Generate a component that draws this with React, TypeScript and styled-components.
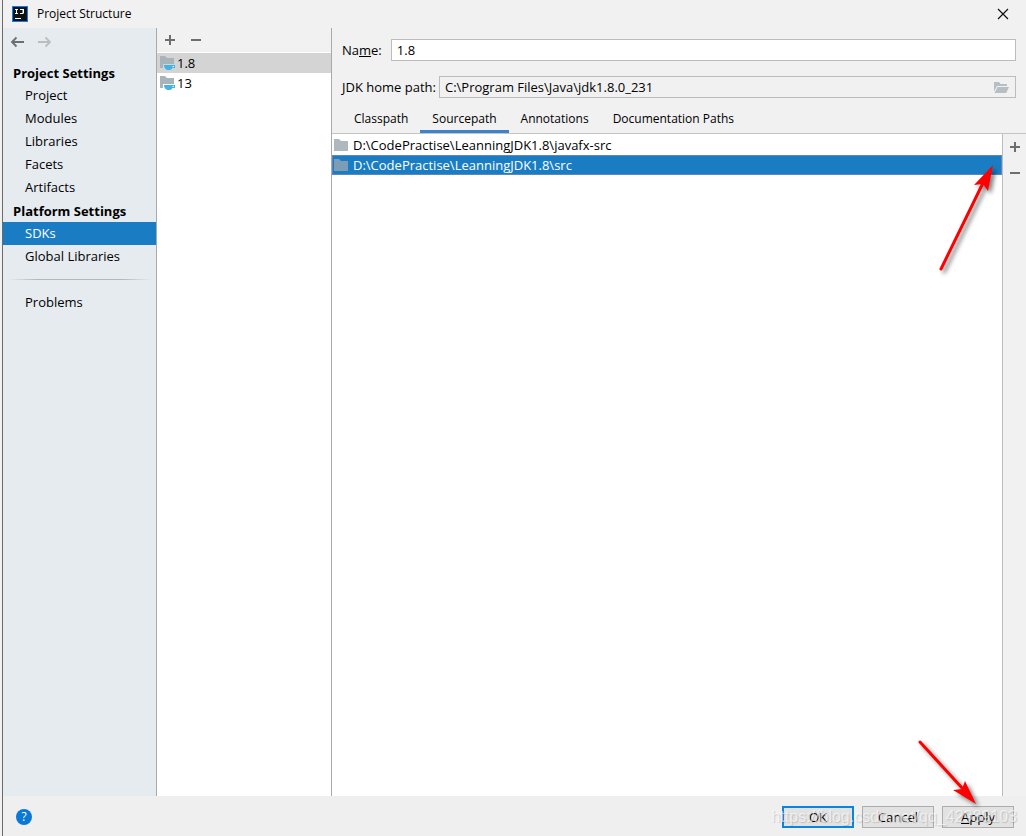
import React, { useState } from "react";
import styled, { createGlobalStyle, css } from "styled-components";

const GlobalStyle = createGlobalStyle`
  * { box-sizing: border-box; }
  body {
    margin: 0;
    background: #f1f1f1;
    color: #000;
    font-family: "Open Sans", "Noto Sans", sans-serif;
    font-size: 13px;
    line-height: 20px;
  }
  button, input { font: inherit; color: inherit; }
`;

const Dialog = styled.div`
  position: relative;
  min-height: 100vh;
  display: flex;
  flex-direction: column;
  margin-left: 2px;
  border-left: 1px solid #6b6b6b;
  background: #f1f1f1;
`;

const TitleBar = styled.header`
  display: flex;
  align-items: center;
  height: 28px;
  padding: 0 16px 0 9px;
`;

const Title = styled.h1`
  flex: 1;
  margin: 0 0 0 9px;
  font-size: 12px;
  font-weight: 400;
`;

const IconButton = styled.button`
  display: flex;
  align-items: center;
  justify-content: center;
  width: 14px;
  height: 14px;
  padding: 0;
  border: 0;
  background: none;
  color: #6e6e6e;

  &:disabled {
    color: #bdbdbd;
  }
`;

const Body = styled.div`
  flex: 1;
  display: flex;
`;

const Sidebar = styled.nav`
  flex: none;
  width: 154px;
  border-right: 1px solid #a9a9a9;
  background: #e6ebf0;
`;

const History = styled.div`
  display: flex;
  gap: 13px;
  padding: 7px 7px 12px;
`;

const GroupTitle = styled.h2`
  margin: 0;
  padding: 1px 0 0 10px;
  font-size: 13px;
  font-weight: 700;
  line-height: 22px;
`;

const NavList = styled.ul`
  margin: 0;
  padding: 0;
  list-style: none;
`;

const NavLink = styled.a<{ $active?: boolean }>`
  display: block;
  padding: 0 0 1px 22px;
  line-height: 22px;
  text-decoration: none;
  color: ${(p) => (p.$active ? "#fff" : "#000")};
  background: ${(p) => (p.$active ? "#1a7dc4" : "transparent")};
`;

const Divider = styled.hr`
  height: 1px;
  margin: 11px 5px;
  border: 0;
  background: linear-gradient(to right, transparent, #b4b8bb 20%, #b4b8bb 80%, transparent);
`;

const SdkColumn = styled.section`
  flex: none;
  width: 175px;
  border-right: 1px solid #a9a9a9;
  background: #fff;
`;

const SdkToolbar = styled.div`
  display: flex;
  gap: 12px;
  height: 24px;
  padding: 5px 6px;
  background: #f1f1f1;
`;

const SdkList = styled.ul`
  margin: 0;
  padding: 1px 0 0;
  list-style: none;
`;

const SdkItem = styled.li<{ $active?: boolean }>`
  display: flex;
  align-items: center;
  gap: 2px;
  height: 20px;
  padding-left: 3px;
  background: ${(p) => (p.$active ? "#d4d4d4" : "transparent")};
`;

const Details = styled.main`
  flex: 1;
  min-width: 0;
  display: flex;
  flex-direction: column;
`;

const Form = styled.form`
  display: grid;
  gap: 15px;
  padding: 11px 10px 0;
`;

const Field = styled.div<{ $gap: number }>`
  display: flex;
  align-items: center;
  gap: ${(p) => p.$gap}px;
`;

const InputFrame = styled.div<{ $disabled?: boolean }>`
  flex: 1;
  display: flex;
  align-items: center;
  height: 22px;
  padding: 0 6px 0 5px;
  border: 1px solid #bcbcbc;
  background: ${(p) => (p.$disabled ? "transparent" : "#fff")};
`;

const Input = styled.input`
  flex: 1;
  min-width: 0;
  height: 20px;
  padding: 0;
  border: 0;
  outline: 0;
  background: none;
`;

const Tabs = styled.div`
  display: flex;
  height: 36px;
  padding-left: 10px;
  border-bottom: 1px solid #c4c4c4;
`;

const Tab = styled.button<{ $active?: boolean }>`
  padding: 9px 12px 0;
  border: 0;
  border-bottom: 3px solid ${(p) => (p.$active ? "#3d82cb" : "transparent")};
  background: none;
  font-size: 12px;
  line-height: 20px;
`;

const PathsArea = styled.div`
  flex: 1;
  display: flex;
`;

const PathList = styled.ul`
  flex: 1;
  margin: 0;
  padding: 1px 0 0;
  list-style: none;
  background: #fff;
`;

const PathItem = styled.li<{ $active?: boolean }>`
  display: flex;
  align-items: center;
  gap: 5px;
  height: 20px;
  padding-left: 1px;
  border: 1px solid transparent;
  ${(p) =>
    p.$active &&
    css`
      color: #fff;
      background: #1a7dc4;
      border-color: #5f86c0;
    `}
`;

const PathTools = styled.div`
  flex: none;
  width: 24px;
  display: flex;
  flex-direction: column;
  align-items: center;
  gap: 12px;
  padding-top: 6px;
  border-left: 1px solid #bcbcbc;
`;

const Footer = styled.footer`
  display: flex;
  align-items: center;
  gap: 8px;
  height: 40px;
  padding: 2px 12px 0 13px;
  background: #efefef;
`;

const HelpButton = styled.button`
  width: 16px;
  height: 16px;
  margin-right: auto;
  padding: 0;
  border: 0;
  border-radius: 50%;
  background: #0a78d6;
  color: #fff;
  font-size: 12px;
  line-height: 16px;
`;

const DialogButton = styled.button<{ $primary?: boolean }>`
  width: 72px;
  height: 22px;
  padding: 0;
  border: ${(p) => (p.$primary ? "2px solid #0a84e0" : "1px solid #adadad")};
  background: #e2e2e2;
  line-height: 18px;
`;

const Arrow = styled.svg`
  position: absolute;
  pointer-events: none;
  overflow: visible;
  filter: drop-shadow(3px 3px 2px rgba(0, 0, 0, 0.5));
`;

const UpArrow = styled(Arrow)`
  top: 165px;
  right: 33px;
`;

const DownArrow = styled(Arrow)`
  right: 50px;
  bottom: 32px;
`;

const Watermark = styled.span`
  position: absolute;
  right: 9px;
  bottom: 9px;
  pointer-events: none;
  color: rgba(255, 255, 255, 0.6);
  font-family: "Liberation Sans", Arial, sans-serif;
  font-size: 16px;
  text-shadow: 1px 1px 1px rgba(0, 0, 0, 0.15);
`;

const AppLogo = () => (
  <svg width="16" height="16" viewBox="0 0 16 16" aria-hidden="true">
    <path d="M0 0h16v16H0z" fill="#087cfa" />
    <path d="M1 1h14v14H1z" fill="#111" />
    <path d="M3 3h3v1H5v3h1v1H3V7h1V4H3zM8 3h4v4l-1 1H8V7h2.500V4H8zM3 12h6v1H3z" fill="#fff" />
  </svg>
);

const CloseIcon = () => (
  <svg width="12" height="12" viewBox="0 0 12 12" aria-hidden="true">
    <path d="M1 1l10 10M11 1L1 11" stroke="#111" strokeWidth="1.200" />
  </svg>
);

const BackIcon = () => (
  <svg width="14" height="14" viewBox="0 0 14 14" aria-hidden="true">
    <path d="M14 7H2M6.500 2.500L2 7l4.500 4.500" fill="none" stroke="currentColor" strokeWidth="1.800" />
  </svg>
);

const ForwardIcon = () => (
  <svg width="14" height="14" viewBox="0 0 14 14" aria-hidden="true">
    <path d="M1 7h12M8.500 2.500L13 7l-4.500 4.500" fill="none" stroke="currentColor" strokeWidth="1.800" />
  </svg>
);

const PlusIcon = () => (
  <svg width="14" height="14" viewBox="0 0 14 14" aria-hidden="true">
    <path d="M2 6h4V2h2v4h4v2H8v4H6V8H2z" fill="currentColor" />
  </svg>
);

const MinusIcon = () => (
  <svg width="14" height="14" viewBox="0 0 14 14" aria-hidden="true">
    <path d="M2 6h10v2H2z" fill="currentColor" />
  </svg>
);

const FolderIcon = ({ color = "#aeb8bf" }: { color?: string }) => (
  <svg width="14" height="12" viewBox="0 0 14 12" aria-hidden="true">
    <path d="M0 0h5l2 2h7v10H0z" fill={color} />
  </svg>
);

const SdkIcon = () => (
  <svg width="15" height="14" viewBox="0 0 15 14" aria-hidden="true">
    <path d="M0 0h5l2 2h7v6H3v4H0z" fill="#a9b4ba" />
    <path d="M4 9h11v3h-2.500q-1 2-3 2H7.500Q4 13 4 9z" fill="#40b4e2" />
    <path d="M12.500 10h1.500v1h-1.500z" fill="#e6f5fb" />
  </svg>
);

const OpenFolderIcon = () => (
  <svg width="15" height="11" viewBox="0 0 15 11" aria-hidden="true">
    <path d="M0 0h5l1.500 2H13v2H3L0 9.500z" fill="#b7bfc4" />
    <path d="M3.500 5H15l-2.800 6H.5z" fill="#b7bfc4" />
  </svg>
);

const projectItems = ["Project", "Modules", "Libraries", "Facets", "Artifacts"];
const platformItems = ["SDKs", "Global Libraries"];
const sdks = ["1.8", "13"];
const tabs = ["Classpath", "Sourcepath", "Annotations", "Documentation Paths"];
const paths = ["D:\\CodePractise\\LeanningJDK1.8\\javafx-src", "D:\\CodePractise\\LeanningJDK1.8\\src"];

const NavItems = ({ items, active }: { items: string[]; active?: string }) => (
  <NavList>
    {items.map((item) => (
      <li key={item}>
        <NavLink href="#" $active={item === active}>{item}</NavLink>
      </li>
    ))}
  </NavList>
);

export default function App() {
  const [name, setName] = useState("1.8");
  const [tab, setTab] = useState("Sourcepath");

  return (
    <>
      <GlobalStyle />
      <Dialog>
        <TitleBar>
          <AppLogo />
          <Title>Project Structure</Title>
          <IconButton aria-label="Close"><CloseIcon /></IconButton>
        </TitleBar>
        <Body>
          <Sidebar>
            <History>
              <IconButton aria-label="Back"><BackIcon /></IconButton>
              <IconButton aria-label="Forward" disabled><ForwardIcon /></IconButton>
            </History>
            <GroupTitle>Project Settings</GroupTitle>
            <NavItems items={projectItems} />
            <GroupTitle>Platform Settings</GroupTitle>
            <NavItems items={platformItems} active="SDKs" />
            <Divider />
            <NavItems items={["Problems"]} />
          </Sidebar>
          <SdkColumn>
            <SdkToolbar>
              <IconButton aria-label="Add SDK"><PlusIcon /></IconButton>
              <IconButton aria-label="Remove SDK"><MinusIcon /></IconButton>
            </SdkToolbar>
            <SdkList>
              {sdks.map((sdk) => (
                <SdkItem key={sdk} $active={sdk === "1.8"}><SdkIcon />{sdk}</SdkItem>
              ))}
            </SdkList>
          </SdkColumn>
          <Details>
            <Form>
              <Field $gap={9}>
                <label htmlFor="sdk-name">Na<u>m</u>e:</label>
                <InputFrame>
                  <Input id="sdk-name" value={name} onChange={(e) => setName(e.target.value)} />
                </InputFrame>
              </Field>
              <Field $gap={3}>
                <label htmlFor="sdk-home">JDK home path:</label>
                <InputFrame $disabled>
                  <Input id="sdk-home" readOnly value={"C:\\Program Files\\Java\\jdk1.8.0_231"} />
                  <OpenFolderIcon />
                </InputFrame>
              </Field>
            </Form>
            <Tabs role="tablist">
              {tabs.map((t) => (
                <Tab key={t} role="tab" aria-selected={t === tab} $active={t === tab} onClick={() => setTab(t)}>{t}</Tab>
              ))}
            </Tabs>
            <PathsArea>
              <PathList>
                {paths.map((path, i) => (
                  <PathItem key={path} $active={i === 1}>
                    <FolderIcon color={i === 1 ? "#7c9db5" : undefined} />
                    {path}
                  </PathItem>
                ))}
              </PathList>
              <PathTools>
                <IconButton aria-label="Add path"><PlusIcon /></IconButton>
                <IconButton aria-label="Remove path"><MinusIcon /></IconButton>
              </PathTools>
            </PathsArea>
          </Details>
        </Body>
        <Footer>
          <HelpButton aria-label="Help">?</HelpButton>
          <DialogButton $primary>OK</DialogButton>
          <DialogButton>Cancel</DialogButton>
          <DialogButton><u>A</u>pply</DialogButton>
        </Footer>
        <UpArrow width="54" height="106" viewBox="0 0 54 106" aria-hidden="true">
          <path d="M2 104L44 18" stroke="#f00" strokeWidth="3" strokeLinecap="round" />
          <path d="M54 0L49 26l-5-7-9 1z" fill="#f00" />
        </UpArrow>
        <DownArrow width="57" height="63" viewBox="0 0 57 63" aria-hidden="true">
          <path d="M1 1L44 48" stroke="#f00" strokeWidth="3" strokeLinecap="round" />
          <path d="M57 63L34 49l9-1 3-8z" fill="#f00" />
        </DownArrow>
        <Watermark>https://blog.csdn.net/qq_42989103</Watermark>
      </Dialog>
    </>
  );
}
